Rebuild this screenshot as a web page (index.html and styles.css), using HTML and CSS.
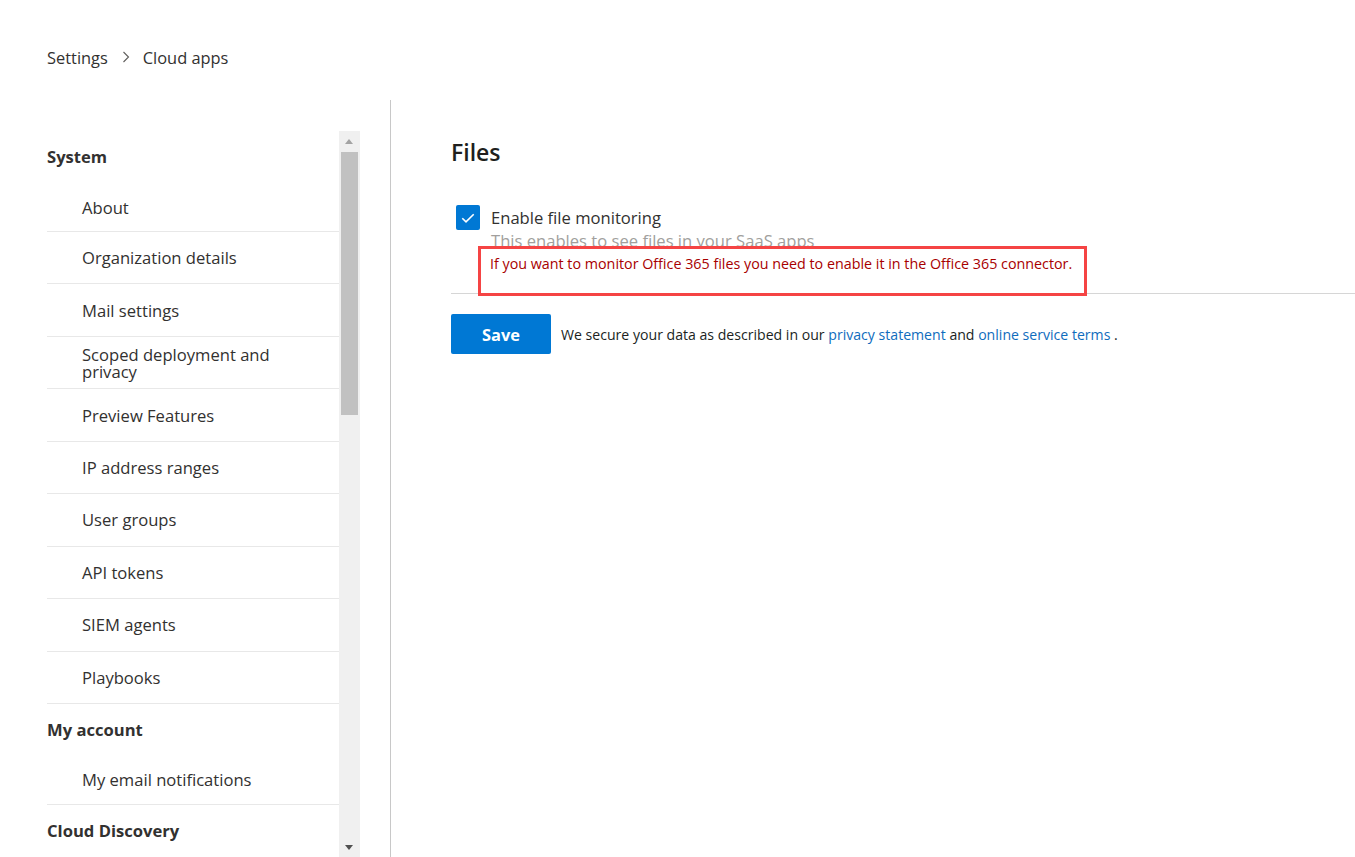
FILE: index.html
```html
<!DOCTYPE html>
<html lang="en">
<head>
<meta charset="utf-8">
<title>Settings - Cloud apps</title>
<link rel="stylesheet" href="styles.css">
</head>
<body>
<div class="page">
  <nav class="breadcrumb">
    <span class="crumb">Settings</span>
    <svg class="chev" width="8" height="12" viewBox="0 0 8 12"><path d="M1.5 1 L6.5 6 L1.5 11" fill="none" stroke="#605e5c" stroke-width="1.1"/></svg>
    <span class="crumb">Cloud apps</span>
  </nav>
  <div class="layout">
    <aside class="sidebar">
      <div class="scrollbox">
        <div class="nav">
          <div class="group-title">System</div>
          <div class="item first">About</div>
          <div class="item">Organization details</div>
          <div class="item">Mail settings</div>
          <div class="item two">Scoped deployment and privacy</div>
          <div class="item">Preview Features</div>
          <div class="item">IP address ranges</div>
          <div class="item">User groups</div>
          <div class="item">API tokens</div>
          <div class="item">SIEM agents</div>
          <div class="item">Playbooks</div>
          <div class="group-title">My account</div>
          <div class="item first">My email notifications</div>
          <div class="group-title">Cloud Discovery</div>
        </div>
        <div class="scrollbar">
          <div class="arrow up"></div>
          <div class="thumb"></div>
          <div class="track"></div>
          <div class="arrow down"></div>
        </div>
      </div>
    </aside>
    <main class="main">
      <h2 class="title">Files</h2>
      <div class="option">
        <div class="check-row">
          <span class="checkbox">
            <svg width="16" height="16" viewBox="0 0 16 16"><path d="M2.3 8.2 L6 11.8 L13.7 4.2" fill="none" stroke="#fff" stroke-width="1.6"/></svg>
          </span>
          <span class="label">Enable file monitoring</span>
        </div>
        <div class="desc">This enables to see files in your SaaS apps</div>
        <div class="note">If you want to monitor Office 365 files you need to enable it in the Office 365 connector.</div>
      </div>
      <div class="actions">
        <button class="save">Save</button>
        <span class="legal">We secure your data as described in our <a href="#">privacy statement</a> and <a href="#">online service terms</a> .</span>
      </div>
    </main>
  </div>
</div>
</body>
</html>
```

FILE: styles.css
```css
html, body {
  margin: 0;
  padding: 0;
  background: #fff;
  overflow: hidden;
}
body {
  font-family: "Segoe UI", "Open Sans", "Noto Sans", sans-serif;
  color: #323130;
}
.page {
  padding-left: 47px;
  height: 100vh;
  display: flex;
  flex-direction: column;
}
.breadcrumb {
  display: flex;
  align-items: center;
  padding-top: 45px;
  height: 24px;
  font-size: 16.4px;
  color: #323130;
}
.chev {
  margin: 0 13px 0 14px;
}
.layout {
  display: flex;
  margin-top: 31px;
  flex: 1;
  min-height: 0;
}
.sidebar {
  width: 343px;
  padding-top: 31px;
  display: flex;
  flex-direction: column;
}
.scrollbox {
  display: flex;
  flex: 1;
  min-height: 0;
  width: 313px;
}
.nav {
  width: 292px;
  overflow: hidden;
}
.group-title {
  height: 52px;
  line-height: 52px;
  font-weight: 700;
  font-size: 16.6px;
}
.item {
  height: 51.45px;
  border-bottom: 1px solid #e8e8e8;
  display: flex;
  align-items: center;
  padding-left: 35px;
  font-size: 16.6px;
  line-height: 17px;
  box-sizing: content-box;
}
.item.first {
  height: 48px;
}
.item.two {
  padding-right: 60px;
}
.scrollbar {
  width: 21px;
  background: #f0f0f0;
  display: flex;
  flex-direction: column;
}
.arrow {
  height: 21px;
  position: relative;
}
.arrow::after {
  content: "";
  position: absolute;
  left: 6px;
  width: 0;
  height: 0;
  border-left: 4.5px solid transparent;
  border-right: 4.5px solid transparent;
}
.arrow.up::after {
  top: 8px;
  border-bottom: 5px solid #a3a3a3;
}
.arrow.down::after {
  top: 9px;
  border-top: 5px solid #505050;
}
.thumb {
  height: 263px;
  margin: 0 2px;
  background: #c1c1c1;
}
.track {
  flex: 1;
}
.main {
  flex: 1;
  border-left: 1px solid #c8c8c8;
  padding-left: 60px;
  padding-top: 36px;
}
.title {
  margin: 0;
  font-size: 23px;
  line-height: 32px;
  font-weight: 600;
  color: #201f1e;
}
.option {
  position: relative;
  margin-top: 37px;
  border-bottom: 1px solid #d6d6d6;
  height: 88px;
}
.check-row {
  display: flex;
  align-items: center;
  height: 25px;
  padding-left: 5px;
}
.checkbox {
  width: 24px;
  height: 25px;
  background: #0078d4;
  border-radius: 2px;
  display: flex;
  align-items: center;
  justify-content: center;
}
.label {
  margin-left: 11px;
  font-size: 16.6px;
}
.desc {
  padding-left: 40px;
  font-size: 16.6px;
  line-height: 22px;
  color: #a19f9d;
}
.note {
  position: absolute;
  left: 27px;
  top: 41px;
  width: 609px;
  height: 50px;
  box-sizing: border-box;
  border: 3px solid #f54444;
  background: #fff;
  padding: 5px 9px 0 9px;
  font-size: 14.3px;
  line-height: 20px;
  color: #a80000;
}
.actions {
  display: flex;
  align-items: center;
  margin-top: 20px;
}
.save {
  width: 100px;
  height: 40px;
  border: none;
  border-radius: 2px;
  background: #0078d4;
  color: #fff;
  font-family: inherit;
  font-size: 16.4px;
  font-weight: 700;
  padding: 0;
}
.legal {
  margin-left: 10px;
  font-size: 14.1px;
  color: #201f1e;
}
.legal a {
  color: #0f6cbd;
  text-decoration: none;
}
```
